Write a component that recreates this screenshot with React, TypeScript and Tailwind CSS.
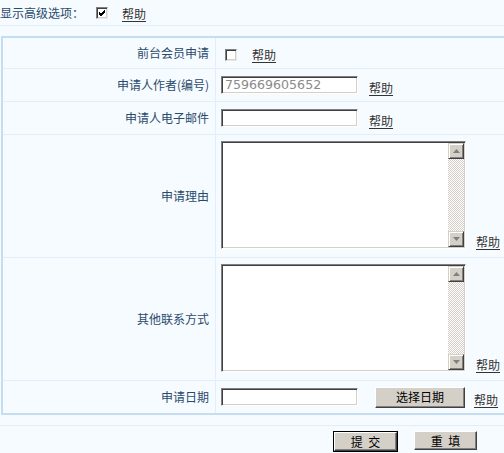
import React from "react";

const FONT = { fontFamily: '"Noto Sans CJK SC", "Noto Sans", sans-serif' };

function Help({ className = "" }: { className?: string }) {
  return (
    <a className={"text-[12px] leading-[14px] text-[#333] underline underline-offset-[2px] whitespace-nowrap " + className}>
      帮助
    </a>
  );
}

function Check({ checked }: { checked?: boolean }) {
  return (
    <span className="inline-flex w-[12px] h-[12px] bg-white border border-t-[#808080] border-l-[#808080] border-b-[#e8e8e8] border-r-[#e8e8e8] shadow-[inset_1px_1px_0_#404040,inset_-1px_-1px_0_#d4d0c8] items-center justify-center">
      {checked && (
        <svg width="8" height="8" viewBox="0 0 8 8">
          <path d="M1 3 L3 5 L7 1 M1 4 L3 6 L7 2 M1 5 L3 7 L7 3" stroke="#000" strokeWidth="1" fill="none" shapeRendering="crispEdges" />
        </svg>
      )}
    </span>
  );
}

function TextInput({ value }: { value?: string }) {
  return (
    <div className="w-[137px] h-[18px] bg-white border border-t-[#808080] border-l-[#808080] border-b-[#ffffff] border-r-[#ffffff] shadow-[inset_1px_1px_0_#404040,inset_-1px_-1px_0_#d4d0c8] flex items-center pl-[3px] overflow-hidden">
      <span className="text-[12.6px] leading-[14px] text-[#8a8a8a]" style={{ fontFamily: '"DejaVu Sans", sans-serif' }}>
        {value}
      </span>
    </div>
  );
}

function Arrow({ up }: { up?: boolean }) {
  return (
    <div className="w-[16px] h-[16px] bg-[#d4d0c8] border border-t-[#d4d0c8] border-l-[#d4d0c8] border-r-[#404040] border-b-[#404040] shadow-[inset_1px_1px_0_#fff,inset_-1px_-1px_0_#808080] flex items-center justify-center">
      <svg width="7" height="4" viewBox="0 0 7 4">
        {up ? <path d="M3.5 0 L7 4 L0 4 Z" fill="#808080" /> : <path d="M0 0 L7 0 L3.5 4 Z" fill="#808080" />}
      </svg>
    </div>
  );
}

function TextArea() {
  return (
    <div className="w-[245px] h-[108px] bg-white border border-t-[#808080] border-l-[#808080] border-b-[#ffffff] border-r-[#ffffff] shadow-[inset_1px_1px_0_#404040,inset_-1px_-1px_0_#d4d0c8] flex p-[1px]">
      <div className="flex-1" />
      <div className="w-[16px] flex flex-col">
        <Arrow up />
        <div className="flex-1 bg-[repeating-conic-gradient(#d4d0c8_0_25%,#ffffff_0_50%)] bg-[length:2px_2px]" />
        <Arrow />
      </div>
    </div>
  );
}

function WinButton({ children, def, className = "" }: { children: React.ReactNode; def?: boolean; className?: string }) {
  const inner = (
    <div
      className={
        "bg-[#d4d0c8] border border-t-[#ffffff] border-l-[#ffffff] border-r-[#404040] border-b-[#404040] shadow-[inset_-1px_-1px_0_#808080] flex items-center justify-center text-[12px] text-black " +
        className
      }
    >
      {children}
    </div>
  );
  if (def) return <div className="border border-black">{inner}</div>;
  return inner;
}

function Row({ label, h, children, last, align = "items-center" }: { label: string; h: string; children: React.ReactNode; last?: boolean; align?: string }) {
  return (
    <div className={"flex " + h + (last ? "" : " border-b border-[#e2effa]")}>
      <div className="w-[213px] border-r border-[#e2effa] flex items-center justify-end pr-[6px] text-[12px] text-[#2a4a6c]">
        {label}
      </div>
      <div className={"flex-1 flex pl-[5px] " + align}>{children}</div>
    </div>
  );
}

export default function App() {
  return (
    <div className="w-[504px] h-[453px] bg-[#f6fbff] overflow-hidden relative" style={FONT}>
      <div className="h-[26px] border-b border-[#e0eef9] flex items-center text-[12px] text-[#2a4a6c]">
        <span className="w-[96px]">显示高级选项：</span>
        <Check checked />
        <Help className="ml-[14px] mt-[2px]" />
      </div>
      <div className="mt-[10px] ml-[1px] w-[560px] border-2 border-[#c4ddf0]">
        <Row label="前台会员申请" h="h-[31px]">
          <div className="ml-[4px] mt-[1px]">
            <Check />
          </div>
          <Help className="ml-[15px] mt-[4px]" />
        </Row>
        <Row label="申请人作者(编号)" h="h-[33px]">
          <TextInput value="759669605652" />
          <Help className="ml-[11px] mt-[6px]" />
        </Row>
        <Row label="申请人电子邮件" h="h-[33px]">
          <TextInput />
          <Help className="ml-[11px] mt-[6px]" />
        </Row>
        <Row label="申请理由" h="h-[123px]" align="items-end pb-[8px]">
          <TextArea />
          <Help className="ml-[10px]" />
        </Row>
        <Row label="其他联系方式" h="h-[123px]" align="items-end pb-[8px]">
          <TextArea />
          <Help className="ml-[10px]" />
        </Row>
        <Row label="申请日期" h="h-[32px]" last>
          <TextInput />
          <WinButton className="w-[90px] h-[21px] ml-[17px]">选择日期</WinButton>
          <Help className="ml-[9px] mt-[5px]" />
        </Row>
      </div>
      <div className="mt-[10px] border-t border-[#e0eef9] pt-[5px] flex">
        <div className="ml-[333px]">
          <WinButton def className="w-[63px] h-[19px]">
            提&nbsp;&nbsp;交
          </WinButton>
        </div>
        <div className="ml-[16px]">
          <WinButton className="w-[63px] h-[19px]">重&nbsp;&nbsp;填</WinButton>
        </div>
      </div>
    </div>
  );
}
